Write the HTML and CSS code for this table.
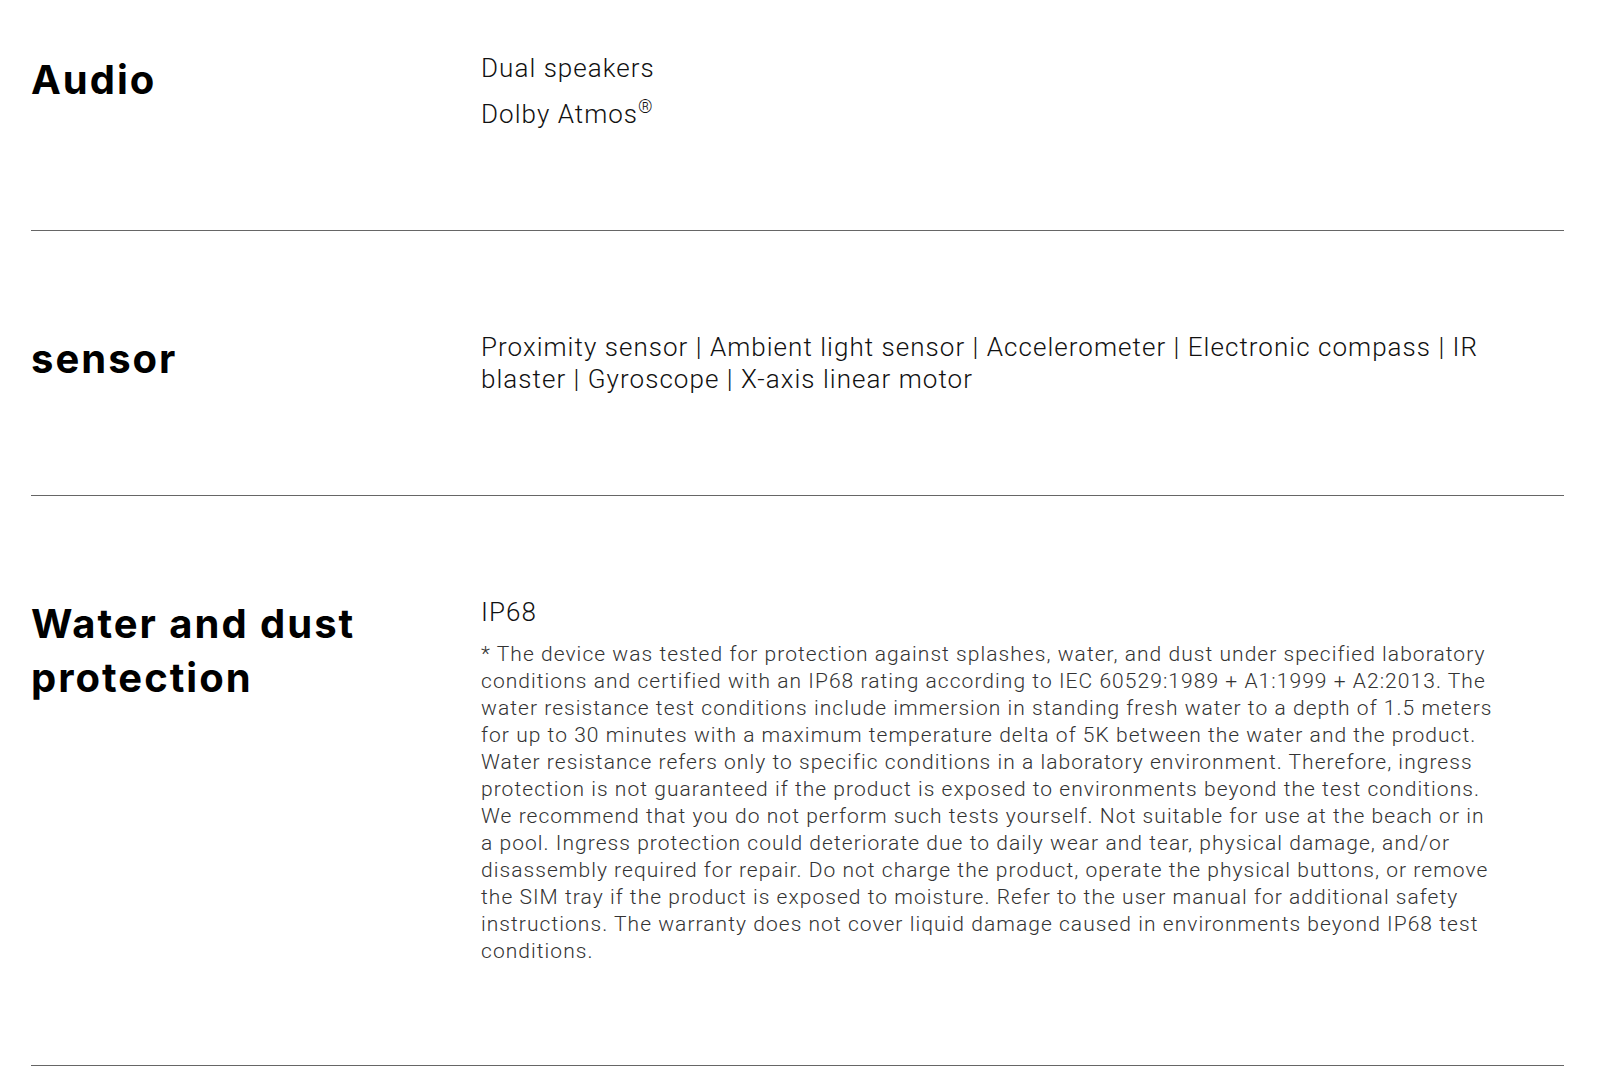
FILE: index.html
```html
<!DOCTYPE html>
<html lang="en">
<head>
<meta charset="utf-8">
<title>Specs</title>
<link rel="stylesheet" href="styles.css">
</head>
<body>
<main class="specs">
  <section class="spec-row spec-row--first">
    <h2 class="spec-title">Audio</h2>
    <div class="spec-body">
      <p class="spec-item">Dual speakers</p>
      <p class="spec-item">Dolby Atmos<sup class="mark">®</sup></p>
    </div>
  </section>
  <section class="spec-row">
    <h2 class="spec-title">sensor</h2>
    <div class="spec-body">
      <p class="spec-item">Proximity sensor | Ambient light sensor | Accelerometer | Electronic compass | IR blaster | Gyroscope | X-axis linear motor</p>
    </div>
  </section>
  <section class="spec-row">
    <h2 class="spec-title">Water and dust protection</h2>
    <div class="spec-body">
      <p class="spec-item">IP68</p>
      <p class="spec-note">* The device was tested for protection against splashes, water, and dust under specified laboratory conditions and certified with an IP68 rating according to IEC 60529:1989 + A1:1999 + A2:2013. The water resistance test conditions include immersion in standing fresh water to a depth of 1.5 meters for up to 30 minutes with a maximum temperature delta of 5K between the water and the product. Water resistance refers only to specific conditions in a laboratory environment. Therefore, ingress protection is not guaranteed if the product is exposed to environments beyond the test conditions. We recommend that you do not perform such tests yourself. Not suitable for use at the beach or in a pool. Ingress protection could deteriorate due to daily wear and tear, physical damage, and/or disassembly required for repair. Do not charge the product, operate the physical buttons, or remove the SIM tray if the product is exposed to moisture. Refer to the user manual for additional safety instructions. The warranty does not cover liquid damage caused in environments beyond IP68 test conditions.</p>
    </div>
  </section>
</main>
</body>
</html>
```
FILE: styles.css
```css
html, body {
  margin: 0;
  padding: 0;
  background: #fff;
}

body {
  font-family: Roboto, "Liberation Sans", sans-serif;
  color: #000;
}

.specs {
  margin-left: 31px;
  width: 1533px;
}

.spec-row {
  display: grid;
  grid-template-columns: 450px 1019px;
  align-items: start;
  padding: 100px 0;
  border-bottom: 1px solid #666;
}

.spec-row--first {
  padding-top: 52px;
}

.spec-title {
  margin: 0;
  padding-top: 1px;
  font-family: Inter, "Liberation Sans", sans-serif;
  font-size: 40px;
  line-height: 54px;
  font-weight: 700;
  letter-spacing: 0.05em;
  color: #000;
}

.spec-body {
  display: flex;
  flex-direction: column;
  gap: 13.5px;
}

.spec-item {
  margin: 0;
  font-size: 26px;
  line-height: 32px;
  font-weight: 300;
  letter-spacing: 0.04em;
  color: #111;
}

.mark {
  font-size: 0.7em;
  line-height: 0;
  letter-spacing: 0;
  vertical-align: 0.55em;
}

.spec-note {
  margin: 0;
  font-size: 21px;
  line-height: 27px;
  font-weight: 300;
  letter-spacing: 0.05em;
  color: #333;
}
```
